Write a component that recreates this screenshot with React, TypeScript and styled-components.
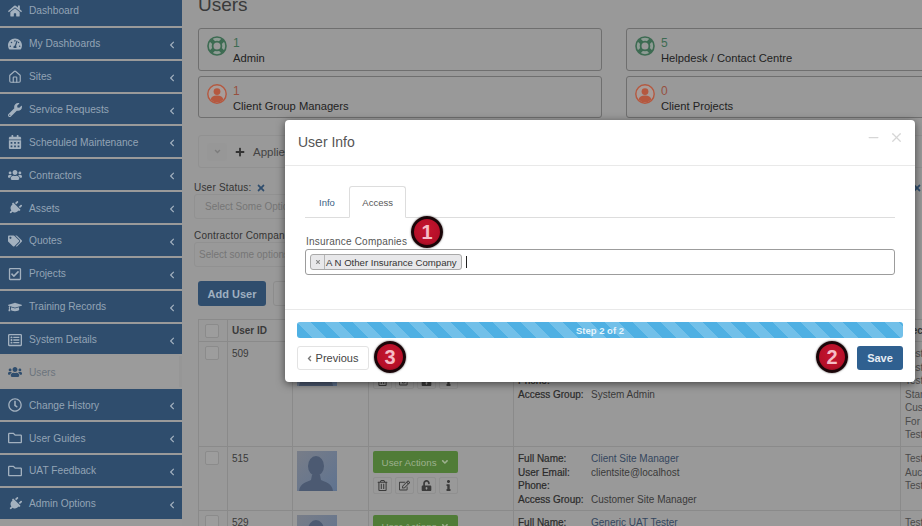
import { ReactNode } from "react";
import styled, { createGlobalStyle } from "styled-components";
import {
  FaHome,
  FaTachometerAlt,
  FaWrench,
  FaCalendarAlt,
  FaUsers,
  FaPlug,
  FaTags,
  FaRegCheckSquare,
  FaGraduationCap,
  FaRegListAlt,
  FaRegClock,
  FaRegFolder,
  FaChevronLeft,
  FaPlus,
  FaTimes,
  FaRegTrashAlt,
  FaRegEdit,
  FaUnlockAlt,
  FaInfo,
  FaAngleDown,
  FaAngleLeft,
} from "react-icons/fa";
import { LuHouse, LuX, LuMinus } from "react-icons/lu";

const GlobalStyle = createGlobalStyle`
  html, body {
    margin: 0;
    height: 100%;
    overflow: hidden;
    background: #999;
    font-family: "Liberation Sans", Arial, sans-serif;
  }
`;

const Page = styled.div`
  position: relative;
  width: 922px;
  height: 526px;
  display: flex;
  overflow: hidden;
  background: #999;
  color: #333;
`;

const Sidebar = styled.nav`
  flex: 0 0 182px;
  display: flex;
  flex-direction: column;
  gap: 2px;
  margin-top: -5px;
  background: #9a9a9a;
`;

const NavItem = styled.div<{ $active?: boolean }>`
  flex: 0 0 30.87px;
  box-sizing: border-box;
  display: flex;
  align-items: center;
  position: relative;
  padding: 1px 0 0 7px;
  font-size: 10.2px;
  background: ${(p) => (p.$active ? "#9b9b9b" : "#2f4d6d")};
  color: ${(p) => (p.$active ? "#6b747d" : "#93a4b5")};
  box-shadow: ${(p) => (p.$active ? "inset -3px 0 0 #969696" : "none")};
`;

const NavIcon = styled.span<{ $active?: boolean; $tilt?: boolean }>`
  width: 15px;
  margin-right: 7px;
  display: flex;
  justify-content: center;
  font-size: 14px;
  color: ${(p) => (p.$active ? "#2f4d6d" : "#a3b1bf")};
  svg {
    transform: ${(p) => (p.$tilt ? "rotate(45deg)" : "none")};
  }
`;

const NavArrow = styled(FaChevronLeft)`
  margin: 2px 6px 0 auto;
  font-size: 8px;
  color: #a3b1bf;
`;

const Main = styled.main`
  flex: 1;
  min-width: 0;
  display: flex;
  flex-direction: column;
  padding: 0 0 0 12px;
  > * {
    flex: none;
  }
`;

const Title = styled.h1`
  margin: -9px 0 0 4px;
  height: 37px;
  font-size: 19px;
  line-height: 28px;
  font-weight: 400;
  color: #3a3a3a;
`;

const Cards = styled.div`
  display: grid;
  grid-template-columns: 404px 404px;
  column-gap: 24px;
  row-gap: 5px;
  margin-left: 4px;
`;

const Card = styled.div`
  height: 42.5px;
  box-sizing: border-box;
  border: 1px solid #6f6f6f;
  border-radius: 3px;
  display: flex;
  align-items: center;
  padding-left: 8px;
  gap: 6px;
`;

const CardIcon = styled.svg`
  flex: 0 0 20px;
  height: 20px;
  align-self: flex-start;
  margin-top: 7px;
`;

const CardText = styled.div`
  padding-top: 4px;
`;

const CardCount = styled.div<{ $tone: string }>`
  font-size: 12px;
  line-height: 15px;
  color: ${(p) => p.$tone};
`;

const CardLabel = styled.div`
  font-size: 11.2px;
  line-height: 15px;
  color: #222;
`;

const FilterBar = styled.div`
  margin: 17px 0 0 4px;
  width: 780px;
  height: 33px;
  box-sizing: border-box;
  border: 1px solid #919191;
  border-radius: 3px;
  display: flex;
  align-items: center;
  padding-left: 8px;
  gap: 8px;
  font-size: 11.5px;
  color: #444;
`;

const Collapse = styled.span`
  width: 20px;
  height: 18px;
  display: flex;
  align-items: center;
  justify-content: center;
  color: #7c7c7c;
  background: #979797;
  border-radius: 3px;
  font-size: 9px;
`;

const FilterRow = styled.div`
  display: flex;
  justify-content: space-between;
  width: 728px;
`;

const FilterLabel = styled.div<{ $top: number }>`
  margin-top: ${(p) => p.$top}px;
  height: 13px;
  display: flex;
  align-items: center;
  gap: 5px;
  font-size: 10px;
  font-weight: 400;
  letter-spacing: 0.2px;
  color: #333;
  white-space: nowrap;
  svg {
    font-size: 10px;
    color: #2f4d6d;
  }
`;

const FilterInput = styled.div<{ $indent: number }>`
  width: 300px;
  height: 25px;
  box-sizing: border-box;
  border: 1px solid #919191;
  border-radius: 3px;
  display: flex;
  align-items: center;
  padding-left: ${(p) => p.$indent}px;
  font-size: 10px;
  color: #767676;
`;

const Buttons = styled.div`
  display: flex;
  gap: 7px;
  margin: 14px 0 0 4px;
`;

const PrimaryButton = styled.div`
  width: 68px;
  height: 25px;
  border-radius: 3px;
  background: #2f4d6d;
  color: #9fb0c1;
  font-size: 11px;
  font-weight: 700;
  display: flex;
  align-items: center;
  justify-content: center;
`;

const GhostButton = styled.div`
  width: 70px;
  height: 25px;
  box-sizing: border-box;
  border: 1px solid #8c8c8c;
  border-radius: 3px;
`;

const Table = styled.table`
  margin: 13px 0 0 4px;
  width: 760px;
  table-layout: fixed;
  border-collapse: collapse;
  font-size: 10px;
  color: #3a3a3a;
  th,
  td {
    border: 1px solid #8a8a8a;
    padding: 0;
    vertical-align: top;
    text-align: left;
  }
  th {
    height: 21px;
    vertical-align: middle;
    font-weight: 700;
    padding-left: 4px;
  }
`;

const Check = styled.div<{ $head?: boolean }>`
  width: 12px;
  height: 12px;
  margin: ${(p) => (p.$head ? "0 0 0 2px" : "4px 0 0 6px")};
  border: 1px solid #8b8b8b;
  border-radius: 2px;
  background: #9d9d9d;
`;

const IdCell = styled.td`
  padding: 6px 0 0 4px !important;
`;

const RightCell = styled.td`
  padding: 5px 0 0 4px !important;
  line-height: 13.5px;
  color: #4a4a4a;
`;

const Avatar = styled.svg`
  display: block;
  width: 40px;
  height: 40px;
  margin: 4px 0 0 4px;
`;

const ActionsCell = styled.td`
  padding: 4px 0 0 4px !important;
`;

const ActionsButton = styled.div`
  width: 85px;
  height: 22px;
  border-radius: 2px;
  background: #507c37;
  color: #9db08e;
  font-size: 9.8px;
  display: flex;
  align-items: center;
  justify-content: center;
  gap: 3px;
`;

const ActionIcons = styled.div`
  display: flex;
  gap: 3px;
  margin-top: 4px;
`;

const ActionIcon = styled.span`
  height: 15px;
  padding: 0 3px;
  min-width: 8px;
  border: 1px solid #909090;
  border-radius: 2px;
  display: flex;
  align-items: center;
  justify-content: center;
  font-size: 11px;
  color: #3b3b3b;
`;

const Details = styled.td`
  padding: 5px 0 0 4px !important;
`;

const DetailRow = styled.div`
  display: grid;
  grid-template-columns: 73px 1fr;
  height: 13.7px;
  line-height: 13.7px;
  white-space: nowrap;
`;

const DetailKey = styled.span`
  font-weight: 400;
  color: #2b2b2b;
  -webkit-text-stroke: 0.2px #2b2b2b;
`;

const DetailLink = styled.span`
  color: #34465e;
`;

const UserRow = styled.tr<{ $tall?: boolean }>`
  height: ${(p) => (p.$tall ? 105 : 64)}px;
`;

/* the dialog floats over the dimmed page */
const Modal = styled.div`
  position: absolute;
  left: 285px;
  top: 120px;
  width: 630px;
  height: 262px;
  background: #fff;
  border-radius: 4px;
  box-shadow: 0 2px 8px rgba(0, 0, 0, 0.55);
  display: flex;
  flex-direction: column;
`;

const ModalHeader = styled.header`
  height: 46px;
  flex: none;
  box-sizing: border-box;
  border-bottom: 1px solid #e9e9e9;
  display: flex;
  align-items: center;
  padding: 0 11px 2px 13px;
  font-size: 14px;
  color: #555;
`;

const WindowControls = styled.div`
  margin: -8px 0 0 auto;
  display: flex;
  align-items: center;
  gap: 8px;
  color: #d6d6d6;
  font-size: 15px;
`;

const ModalBody = styled.div`
  height: 144px;
  flex: none;
  box-sizing: border-box;
  padding: 20px 20px 0;
  border-bottom: 1px solid #e9e9e9;
`;

const Tabs = styled.div`
  display: flex;
  height: 32px;
  box-sizing: border-box;
  border-bottom: 1px solid #ddd;
`;

const Tab = styled.div<{ $active?: boolean }>`
  height: 32px;
  box-sizing: border-box;
  padding: 0 ${(p) => (p.$active ? "12.5px" : "13px")};
  font-size: 9.5px;
  display: flex;
  align-items: center;
  border: 1px solid ${(p) => (p.$active ? "#ddd" : "transparent")};
  border-bottom-color: ${(p) => (p.$active ? "#fff" : "transparent")};
  border-radius: 3px 3px 0 0;
  color: ${(p) => (p.$active ? "#555" : "#3c6184")};
`;

const FieldLabel = styled.div`
  margin: 17px 0 0 1px;
  font-size: 10px;
  line-height: 13px;
  letter-spacing: 0.2px;
  color: #555;
`;

const MultiSelect = styled.div`
  margin-top: 1px;
  height: 26px;
  box-sizing: border-box;
  border: 1px solid #9c9c9c;
  border-radius: 3px;
  display: flex;
  align-items: center;
  padding-left: 4px;
  gap: 4px;
`;

const Chip = styled.div`
  height: 16px;
  box-sizing: border-box;
  border: 1px solid #a9a9a9;
  border-radius: 3px;
  background: #e8e8ea;
  display: flex;
  align-items: center;
  font-size: 9.6px;
  color: #333;
  padding-right: 4px;
`;

const ChipRemove = styled.span`
  width: 13px;
  height: 100%;
  margin-right: 1px;
  border-right: 1px solid #b5b5b5;
  display: flex;
  align-items: center;
  justify-content: center;
  font-size: 6px;
  color: #888;
`;

const Caret = styled.span`
  width: 1px;
  height: 12px;
  background: #222;
`;

const ModalFooter = styled.footer`
  padding: 12px 12px 0;
  display: flex;
  flex-direction: column;
  gap: 8px;
`;

const Progress = styled.div`
  height: 16px;
  border-radius: 3px;
  background-color: #4fb0e3;
  background-image: linear-gradient(
    45deg,
    rgba(255, 255, 255, 0.2) 25%,
    transparent 25%,
    transparent 50%,
    rgba(255, 255, 255, 0.2) 50%,
    rgba(255, 255, 255, 0.2) 75%,
    transparent 75%
  );
  background-size: 28px 28px;
  display: flex;
  align-items: center;
  justify-content: center;
  color: #e4f4fc;
  font-size: 9.5px;
  font-weight: 700;
`;

const FooterRow = styled.div`
  display: flex;
  justify-content: space-between;
`;

const PrevButton = styled.div`
  width: 72px;
  height: 24px;
  box-sizing: border-box;
  border: 1px solid #e3e3e3;
  border-radius: 3px;
  padding-right: 3px;
  display: flex;
  align-items: center;
  justify-content: center;
  gap: 2px;
  font-size: 11px;
  color: #444;
  svg {
    font-size: 9px;
    color: #777;
  }
`;

const SaveButton = styled.div`
  width: 46px;
  height: 24px;
  border-radius: 3px;
  background: #2f6090;
  color: #e6edf4;
  font-size: 11px;
  font-weight: 700;
  display: flex;
  align-items: center;
  justify-content: center;
`;

/* numbered callouts pasted on top of the screenshot */
const Marker = styled.div<{ $x: number; $y: number }>`
  position: absolute;
  left: ${(p) => p.$x - 285 - 16}px;
  top: ${(p) => p.$y - 120 - 16}px;
  width: 32px;
  height: 32px;
  box-sizing: border-box;
  border-radius: 50%;
  border: 3px solid #1a0508;
  box-shadow: 0 0 2px rgba(0, 0, 0, 0.7);
  background: radial-gradient(circle at 50% 40%, #c5152f 0%, #b50f28 65%, #70091a 100%);
  color: #f5bcc6;
  font-size: 20px;
  font-weight: 700;
  display: flex;
  align-items: center;
  justify-content: center;
`;

const navItems: { label: string; icon: ReactNode; arrow?: boolean; active?: boolean; tilt?: boolean }[] = [
  { label: "Dashboard", icon: <FaHome /> },
  { label: "My Dashboards", icon: <FaTachometerAlt />, arrow: true },
  { label: "Sites", icon: <LuHouse />, arrow: true },
  { label: "Service Requests", icon: <FaWrench />, arrow: true },
  { label: "Scheduled Maintenance", icon: <FaCalendarAlt />, arrow: true },
  { label: "Contractors", icon: <FaUsers />, arrow: true },
  { label: "Assets", icon: <FaPlug />, arrow: true, tilt: true },
  { label: "Quotes", icon: <FaTags />, arrow: true },
  { label: "Projects", icon: <FaRegCheckSquare />, arrow: true },
  { label: "Training Records", icon: <FaGraduationCap />, arrow: true },
  { label: "System Details", icon: <FaRegListAlt />, arrow: true },
  { label: "Users", icon: <FaUsers />, active: true },
  { label: "Change History", icon: <FaRegClock />, arrow: true },
  { label: "User Guides", icon: <FaRegFolder />, arrow: true },
  { label: "UAT Feedback", icon: <FaRegFolder />, arrow: true },
  { label: "Admin Options", icon: <FaPlug />, arrow: true, tilt: true },
];

const GREEN = "#3d6b52";
const RED = "#97503f";

const LifeRing = () => (
  <CardIcon viewBox="0 0 20 20">
    <circle cx="10" cy="10" r="9" fill="#8f9c95" stroke={GREEN} strokeWidth="1.6" />
    <path d="M4 4l3.4 3.4M16 4l-3.4 3.4M4 16l3.4-3.4M16 16l-3.4-3.4" stroke={GREEN} strokeWidth="4" />
    <circle cx="10" cy="10" r="4.4" fill="#999" stroke={GREEN} strokeWidth="1.8" />
  </CardIcon>
);

const PersonRing = () => (
  <CardIcon viewBox="0 0 20 20">
    <circle cx="10" cy="10" r="9.2" fill="#a89d9a" stroke="#b5583f" strokeWidth="1.4" />
    <circle cx="10" cy="7.6" r="3.4" fill="#b5583f" />
    <path d="M3.6 15.5c.6-2.8 2.8-4 6.4-4s5.8 1.2 6.4 4a8.6 8.6 0 0 1-12.8 0z" fill="#b5583f" />
  </CardIcon>
);

const StatCard = ({ count, label, ok }: { count: number; label: string; ok?: boolean }) => (
  <Card>
    {ok ? <LifeRing /> : <PersonRing />}
    <CardText>
      <CardCount $tone={ok ? GREEN : RED}>{count}</CardCount>
      <CardLabel>{label}</CardLabel>
    </CardText>
  </Card>
);

const Silhouette = () => (
  <Avatar viewBox="0 0 40 40">
    <defs>
      <linearGradient id="avatarBg" x1="0" y1="0" x2="1" y2="1">
        <stop offset="0" stopColor="#787d88" />
        <stop offset="1" stopColor="#5f7390" />
      </linearGradient>
    </defs>
    <rect width="40" height="40" fill="url(#avatarBg)" />
    <ellipse cx="19" cy="15" rx="8" ry="10" fill="#4c5a72" />
    <path d="M2 40c1-8 8-9 12-11l1-5h8l1 5c4 2 11 3 12 11z" fill="#4c5a72" />
  </Avatar>
);

const Actions = () => (
  <>
    <ActionsButton>
      User Actions <FaAngleDown />
    </ActionsButton>
    <ActionIcons>
      <ActionIcon><FaRegTrashAlt /></ActionIcon>
      <ActionIcon><FaRegEdit /></ActionIcon>
      <ActionIcon><FaUnlockAlt /></ActionIcon>
      <ActionIcon><FaInfo /></ActionIcon>
    </ActionIcons>
  </>
);

const Detail = ({ k, v, link }: { k: string; v?: string; link?: boolean }) => (
  <DetailRow>
    <DetailKey>{k}</DetailKey>
    {link ? <DetailLink>{v}</DetailLink> : <span>{v}</span>}
  </DetailRow>
);

export default function App() {
  return (
    <Page>
      <GlobalStyle />
      <Sidebar>
        {navItems.map((item) => (
          <NavItem key={item.label} $active={item.active}>
            <NavIcon $active={item.active} $tilt={item.tilt}>{item.icon}</NavIcon>
            {item.label}
            {item.arrow && <NavArrow />}
          </NavItem>
        ))}
      </Sidebar>

      <Main>
        <Title>Users</Title>
        <Cards>
          <StatCard ok count={1} label="Admin" />
          <StatCard ok count={5} label="Helpdesk / Contact Centre" />
          <StatCard count={1} label="Client Group Managers" />
          <StatCard count={0} label="Client Projects" />
        </Cards>

        <FilterBar>
          <Collapse><FaAngleDown /></Collapse>
          <FaPlus size={10} color="#333" />
          Applied Filters
        </FilterBar>

        <FilterRow>
          <div>
            <FilterLabel $top={13}>User Status: <FaTimes /></FilterLabel>
            <FilterInput $indent={10}>Select Some Options</FilterInput>
          </div>
          <FilterLabel $top={13}><FaTimes /></FilterLabel>
        </FilterRow>
        <FilterRow>
          <div>
            <FilterLabel $top={10}>Contractor Companies</FilterLabel>
            <FilterInput $indent={4}>Select some options</FilterInput>
          </div>
        </FilterRow>

        <Buttons>
          <PrimaryButton>Add User</PrimaryButton>
          <GhostButton />
        </Buttons>

        <Table>
          <colgroup>
            <col width="29" />
            <col width="65" />
            <col width="76" />
            <col width="145" />
            <col width="387" />
            <col width="58" />
          </colgroup>
          <thead>
            <tr>
              <th><Check $head /></th>
              <th>User ID</th>
              <th />
              <th />
              <th />
              <th>Sec</th>
            </tr>
          </thead>
          <tbody>
            <UserRow $tall>
              <td><Check /></td>
              <IdCell>509</IdCell>
              <td><Silhouette /></td>
              <ActionsCell><Actions /></ActionsCell>
              <Details>
                <Detail k="Full Name:" v="System Admin" link />
                <Detail k="User Email:" v="admin@localhost" />
                <Detail k="Phone:" />
                <Detail k="Access Group:" v="System Admin" />
              </Details>
              <RightCell>Test<br />Test<br />Test<br />Stan<br />Cus<br />For<br />Test</RightCell>
            </UserRow>
            <UserRow>
              <td><Check /></td>
              <IdCell>515</IdCell>
              <td><Silhouette /></td>
              <ActionsCell><Actions /></ActionsCell>
              <Details>
                <Detail k="Full Name:" v="Client Site Manager" link />
                <Detail k="User Email:" v="clientsite@localhost" />
                <Detail k="Phone:" />
                <Detail k="Access Group:" v="Customer Site Manager" />
              </Details>
              <RightCell>Test<br />Auc<br />Test</RightCell>
            </UserRow>
            <UserRow>
              <td><Check /></td>
              <IdCell>529</IdCell>
              <td><Silhouette /></td>
              <ActionsCell><Actions /></ActionsCell>
              <Details>
                <Detail k="Full Name:" v="Generic UAT Tester" link />
              </Details>
              <RightCell>Test</RightCell>
            </UserRow>
          </tbody>
        </Table>
      </Main>

      <Modal>
        <ModalHeader>
          User Info
          <WindowControls>
            <LuMinus />
            <LuX />
          </WindowControls>
        </ModalHeader>
        <ModalBody>
          <Tabs>
            <Tab>Info</Tab>
            <Tab $active>Access</Tab>
          </Tabs>
          <FieldLabel>Insurance Companies</FieldLabel>
          <MultiSelect>
            <Chip>
              <ChipRemove><FaTimes /></ChipRemove>
              A N Other Insurance Company
            </Chip>
            <Caret />
          </MultiSelect>
        </ModalBody>
        <ModalFooter>
          <Progress>Step 2 of 2</Progress>
          <FooterRow>
            <PrevButton><FaAngleLeft />Previous</PrevButton>
            <SaveButton>Save</SaveButton>
          </FooterRow>
        </ModalFooter>
        <Marker $x={427} $y={232}>1</Marker>
        <Marker $x={832} $y={357}>2</Marker>
        <Marker $x={390} $y={357}>3</Marker>
      </Modal>
    </Page>
  );
}
